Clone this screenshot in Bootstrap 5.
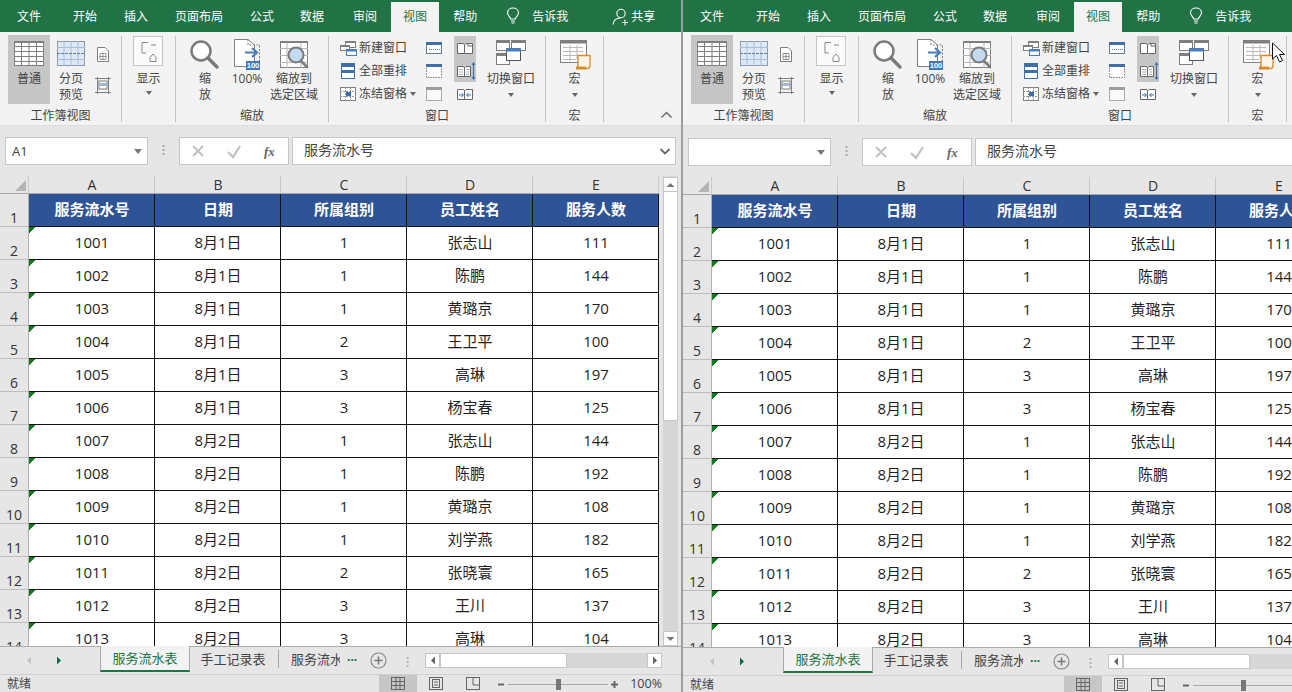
<!doctype html>
<html lang="zh">
<head>
<meta charset="utf-8">
<title>Excel</title>
<link href="https://cdn.jsdelivr.net/npm/bootstrap@5.3.0/dist/css/bootstrap.min.css" rel="stylesheet">
<style>
html,body{height:692px;overflow:hidden;margin:0}
body{font-family:"Open Sans","Noto Sans CJK SC",sans-serif;font-size:12px;color:#444;background:#e6e6e6}
.xl-desk{width:1292px;height:692px;overflow:hidden;position:relative}
.xl-win{width:683px;flex:none;height:692px;overflow:hidden;background:#e6e6e6}
.xl-win.first{border-right:2px solid #9c9c9c}
.tabsbar{height:32px;background:#217346;color:#fff;padding-top:2px;flex:none}
.tabsbar>span{padding:0 13px;line-height:29px;height:30px;white-space:nowrap}
.tabsbar>span.on{background:#f3f3f3;color:#217346;padding:0 12px;margin:0 1px 0 1px}
.tabsbar svg{flex:none}
.ribbon{height:94px;background:#f3f3f3;flex:none;padding-top:3px;border-bottom:1px solid #e2dcdc;line-height:16px}
.rgrp{flex:none;border-right:1px solid #c4c4c4;margin-top:1px;height:86px;position:relative;text-align:center}
.rbody{height:69px;margin-top:-1px}
.rlabel{line-height:16px;margin-top:4px}
.rbtn{flex:none;height:69px;text-align:center}
.rbtn svg,.rcol svg{display:block}
.rbtn.hot{background:#c6c6c6}
.rcol{flex:none}
.rrow{height:23px;align-items:center;white-space:nowrap;display:flex}
.caret-d{display:block;width:0;height:0;border:3px solid transparent;border-top:4px solid #666;border-bottom:0;margin:6px auto 0}
.fbar{height:50px;flex:none;padding-top:11px}
.second .fbar{height:51px;padding-top:12px}
.fbox{height:28px;background:#fff;border:1px solid #c6c6c6;flex:none}
.fname{width:143px;margin-left:5px;line-height:26px;padding-left:6px;font-size:13px}
.fdots{width:31px;flex:none}
.ftools{width:110px}
.fmain{width:384px;margin-left:3px;line-height:24px;padding-left:11px;font-size:14px}
.sheetarea{flex:1 1 0;min-height:0;overflow:hidden}
.sheetclip{width:660px;flex:none;overflow:hidden}
.table.sheet{--bs-table-bg:transparent;--bs-table-color:#1f1f1f;width:659px;table-layout:fixed;border-collapse:separate;border-spacing:0;margin:0;font-size:15px}
.table.sheet>:not(caption)>*>*{padding:0 0 2px 1px;border:0;border-right:1px solid #111;border-bottom:1px solid #111;text-align:center;vertical-align:middle;height:33px;box-shadow:none;font-weight:400;line-height:20px;background:#fff}
.table.sheet>:not(caption)>*>.ch{height:18px;padding:0 0 0 1px;background:#e6e6e6;border-right:1px solid #c8c8c8;border-bottom:1px solid #a6a6a6;font-size:14px;color:#333;line-height:17px}
.table.sheet>:not(caption)>*>.rh{background:#e6e6e6;border-right:1px solid #b0b0b0;border-bottom:1px solid #bdbdbd;font-size:14px;color:#333;vertical-align:bottom;line-height:16px;padding:0}
.table.sheet>:not(caption)>*>.hd{background:#2f5496;color:#fff;font-weight:700}
.table.sheet>:not(caption)>*>.tri{background:#fff linear-gradient(135deg,#0f7a1e 4.4px,rgba(255,255,255,0) 4.8px) no-repeat}
.vscroll{width:15px;margin-left:3px;flex:none;background:#d6d6d6;border:0;padding-top:1px}
.sbtn{background:#fff;border:1px solid #c6c6c6;flex:none;align-items:center;justify-content:center;display:flex}
.vscroll .sbtn{height:15px}
.vthumb{height:229px;background:#fff;border:1px solid #c6c6c6;border-top:0;flex:none}
.tabstrip{height:28px;flex:none;border-top:1px solid #ababab;position:relative;background:#e6e6e6}
.sh-nav{width:100px;flex:none}
.sh-on{width:90px;flex:none;margin-top:-1px;background:#f3f3f3;border:1px solid #ababab;border-top:0;border-bottom:2px solid #217346;height:26px;color:#217346;font-size:13px;text-align:center;line-height:24px}
.sh-tab{width:89px;flex:none;height:18px;margin-top:3px;padding-right:2px;border-right:1px solid #a8a8a8;font-size:13px;text-align:center;line-height:18px;color:#444}
.sh-cut{width:49px;flex:none;margin:3px 0 0 12px;overflow:hidden;white-space:nowrap;font-size:13px;line-height:18px;color:#444}
.hsc{height:15px;margin-top:6px;flex:none;width:237px}
.hsc .sbtn{width:15px}
.hthumb{width:127px;background:#fff;border:1px solid #c6c6c6;flex:none}
.htrack{flex:1 1 0;background:#d6d6d6}
.statusbar{height:18px;flex:none;border-top:1px solid #d0d0d0;line-height:17px;padding-left:7px;padding-right:19px}
.second .statusbar{height:17px}
.statusbar .vw{width:38px;height:17px;flex:none}
.statusbar .vw.act{background:#c6c6c6}
.cursorshape{position:absolute;left:1271px;top:42px;pointer-events:none}
</style>
</head>
<body>
<div class="xl-desk d-flex" id="desk"></div>
<script>
const G='#7f7f7f',B='#4a7ebb';
const svg=(w,h,s)=>`<svg width="${w}" height="${h}" viewBox="0 0 ${w} ${h}" fill="none">${s}</svg>`;
const ic={
normal:svg(42,36,`<rect x="6.500" y="6.500" width="29" height="24" fill="#fff" stroke="${G}"/><path d="M6 11.500H36M6 16.500H36M6 21.500H36M6 26.500H36M13.500 6V31M21 6V31M28.500 6V31" stroke="${G}"/><rect x="6" y="6" width="30" height="2" fill="${G}"/>`),
page:svg(42,36,`<rect x="7.500" y="6.500" width="27" height="24" fill="#dfe9f6" stroke="#8a9bb0"/><path d="M7 12.500H35M7 24.500H35M14 6V31M21 6V31M28 6V31" stroke="#a9bedb"/><path d="M7 18.500H35" stroke="#5a7fae" stroke-dasharray="3 1"/>`),
smalls:svg(22,69,`<path d="M5.500 12.500H13L16.500 16V26.500H5.500Z" fill="#fff" stroke="${G}"/><path d="M8 18.500H14V24.500H8ZM11 18V25M8 21.500H14" stroke="${G}" stroke-width=".8"/><path d="M3 43.500H19M3 57.500H19M5.500 42V59M16.500 42V59" stroke="${G}"/><rect x="7" y="46" width="8" height="8" fill="#fff" stroke="${G}"/><rect x="7" y="48" width="8" height="3" fill="#9fb6d6"/>`),
show:svg(54,36,`<rect x="11.500" y="1.500" width="29" height="29" fill="#fafafa" stroke="#c6c6c6"/><path d="M20 7.500H26M20 7.500V18H24M29 10H34M28 22.500L31 19L34 22.500V26.500H28Z" stroke="#888" fill="none"/>`),
mag:svg(38,36,`<circle cx="15" cy="16" r="9.500" fill="#fff" stroke="#7b7b7b" stroke-width="2.500"/><path d="M22 23L31 32" stroke="#7b7b7b" stroke-width="3.500" stroke-linecap="round"/>`),
hund:svg(46,36,`<path d="M10.500 4.500H24L30.500 10V31.500H10.500Z" fill="#fff" stroke="${G}"/><path d="M24 4.500V10H35.500V26" stroke="${G}" stroke-dasharray="2 1.500"/><path d="M21 17.500H32M28 13L33 17.500L28 22" stroke="${B}" stroke-width="2.200"/><rect x="22" y="26" width="14" height="9" fill="#3f79ba"/><text x="29" y="33.300" text-anchor="middle" fill="#fff" font-size="7.500" font-weight="700" font-family="Liberation Sans">100</text>`),
sel:svg(48,36,`<rect x="10.500" y="6.500" width="27" height="26" fill="#fff" stroke="${G}"/><path d="M10 13.500H38M10 20.500H38M10 27.500H38M17 6V33M31 6V33" stroke="#b5b5b5"/><rect x="10" y="6" width="28" height="2" fill="${G}"/><circle cx="26" cy="20" r="7.500" fill="#c4daf0" stroke="#7b7b7b" stroke-width="2"/><path d="M31 26L37 32" stroke="#7b7b7b" stroke-width="2.600" stroke-linecap="round"/>`),
neww:svg(18,16,`<rect x="6.500" y="1.500" width="10" height="6" fill="#fff" stroke="${G}"/><rect x="6" y="1" width="11" height="2" fill="${G}"/><rect x="1.500" y="5.500" width="9" height="5" fill="#fff" stroke="${G}"/><rect x="1" y="5" width="10" height="2" fill="${G}"/><rect x="7.500" y="9.500" width="10" height="6" fill="#fff" stroke="${B}"/><rect x="7" y="9" width="11" height="2.500" fill="${B}"/>`),
arr:svg(18,18,`<rect x="2.500" y="1.500" width="13" height="15" fill="#fff" stroke="#3f6fa8"/><rect x="2" y="1" width="14" height="4" fill="#3f6fa8"/><rect x="2" y="8" width="14" height="3" fill="#3f6fa8"/>`),
frz:svg(18,18,`<rect x="1.500" y="2.500" width="15" height="13" fill="#fff" stroke="${G}"/><path d="M1 6.500H17M1 11.500H17M6.500 2V16M11.500 2V16" stroke="#9a9a9a" stroke-dasharray="2 1"/><rect x="7" y="7" width="5" height="4" fill="#3f6fa8"/>`),
win1:svg(18,14,`<rect x=".5" y="1.500" width="15" height="11" fill="#fff" stroke="#5f7f9f"/><rect x="0" y="1" width="16" height="3" fill="#3f6fa8"/><path d="M3 8.500H14" stroke="${B}" stroke-dasharray="1 1"/>`),
win2:svg(18,16,`<rect x=".5" y="1.500" width="15" height="13" fill="#fff" stroke="#777" stroke-dasharray="1.500 1.200"/><rect x="0" y="1" width="16" height="3" fill="#3f6fa8"/>`),
win3:svg(18,16,`<rect x=".5" y="1.500" width="15" height="13" fill="#fafafa" stroke="#aaa"/><rect x="0" y="1" width="16" height="3" fill="#9c9c9c"/>`),
pg1:svg(22,14,`<path d="M3.500 2.500H9.500L10.500 4V12.500H3.500ZM10.500 4L12 2.500H18.500V12.500H10.500" fill="#fff" stroke="#666"/><path d="M14 2.500V5H18.500" stroke="#666"/>`),
pg2:svg(22,18,`<path d="M3.500 4.500H9.500L10.500 6V14.500H3.500ZM10.500 6L12 4.500H16.500V14.500H10.500" fill="#fff" stroke="#666"/><path d="M5 7.500H9M5 10H9M5 12.500H9M12 7.500H15M12 10H15M12 12.500H15" stroke="#999" stroke-width=".8"/><path d="M19.500 1V17M18 3L19.500 1L21 3M18 15L19.500 17L21 15" stroke="#3f6fa8" stroke-width="1.100"/>`),
pg3:svg(22,16,`<path d="M3.500 3.500H9.500L10.500 5V13.500H3.500ZM10.500 5L12 3.500H18.500V13.500H10.500" fill="#fff" stroke="#666"/><path d="M5 9H9M7.500 7L9.500 9L7.500 11M17 9H13M14.500 7L12.500 9L14.500 11" stroke="#3f6fa8" stroke-width="1"/>`),
sw:svg(60,36,`<rect x="15.500" y="5.500" width="13" height="10" fill="#fff" stroke="${G}"/><rect x="15" y="5" width="14" height="3" fill="${G}"/><rect x="30.500" y="5.500" width="14" height="10" fill="#fff" stroke="${G}"/><rect x="30" y="5" width="15" height="3" fill="${G}"/><rect x="15.500" y="18.500" width="13" height="11" fill="#fff" stroke="${G}"/><rect x="15" y="18" width="14" height="3" fill="${G}"/><rect x="25.500" y="13.500" width="14" height="12" fill="#fff" stroke="#555"/><rect x="25" y="13" width="15" height="3.500" fill="${B}"/>`),
mac:svg(58,36,`<rect x="14.500" y="5.500" width="26" height="22" fill="#fff" stroke="${G}"/><rect x="14" y="5" width="27" height="3.500" fill="${G}"/><path d="M17 12.500H37M17 16.500H37M17 20.500H37M17 24.500H30M24 10V26M31 10V24" stroke="#b9b9b9"/><path d="M32 20.500H44V31C44 33 42 33.500 41 33.500H30C32 33 32 31 32 29.500Z" fill="#fbf4e8" stroke="#d68b2b" stroke-width="1.300"/><path d="M30 33H40" stroke="#d68b2b" stroke-width="2.800"/>`),
bulb:svg(14,18,`<path d="M4.500 12C4.500 9.500 1.500 9 1.500 5.800C1.500 3 4 1 7 1C10 1 12.500 3 12.500 5.800C12.500 9 9.500 9.500 9.500 12Z" stroke="#fff" stroke-width="1.100"/><path d="M5 14H9M5.500 16H8.500" stroke="#fff" stroke-width="1.100"/>`),
user:svg(18,18,`<circle cx="9" cy="5.500" r="4.200" stroke="#fff" stroke-width="1.100"/><path d="M1 16.500C1.500 12.500 4 10 8.500 10" stroke="#fff" stroke-width="1.100"/><path d="M13 11.500V17.500M10 14.500H16" stroke="#fff" stroke-width="1.100"/>`),
up:svg(13,8,`<path d="M1.500 6.500L6.500 1.500L11.500 6.500" stroke="#666" stroke-width="1.400"/>`),
};
const rows=[['1001','8月1日','1','张志山','111'],['1002','8月1日','1','陈鹏','144'],['1003','8月1日','1','黄璐京','170'],['1004','8月1日','2','王卫平','100'],['1005','8月1日','3','高琳','197'],['1006','8月1日','3','杨宝春','125'],['1007','8月2日','1','张志山','144'],['1008','8月2日','1','陈鹏','192'],['1009','8月2日','1','黄璐京','108'],['1010','8月2日','1','刘学燕','182'],['1011','8月2日','2','张晓寰','165'],['1012','8月2日','3','王川','137'],['1013','8月2日','3','高琳','104']];
const heads=['服务流水号','日期','所属组别','员工姓名','服务人数'];
const table=`<table class="table sheet"><colgroup><col style="width:29px">${'<col style="width:126px">'.repeat(5)}</colgroup><tbody>
<tr><td class="ch"><svg width="28" height="17" style="display:block"><path d="M25 4V15H14Z" fill="#b4b4b4"/></svg></td>${['A','B','C','D','E'].map(c=>`<td class="ch">${c}</td>`).join('')}</tr>
<tr><td class="rh">1</td>${heads.map(h=>`<td class="hd">${h}</td>`).join('')}</tr>
${rows.map((r,i)=>`<tr><td class="rh">${i+2}</td>${r.map((c,j)=>`<td${j==0?' class="tri"':''}>${c}</td>`).join('')}</tr>`).join('')}
<tr><td class="rh">14</td><td class="tri"></td><td></td><td></td><td></td><td></td></tr>
</tbody></table>`;
const tri=(d,c)=>d=='l'?`<svg width="6" height="9"><path d="M5 .5V8.500L1 4.500Z" fill="${c}"/></svg>`:d=='r'?`<svg width="6" height="9"><path d="M1 .5V8.500L5 4.500Z" fill="${c}"/></svg>`:d=='u'?`<svg width="9" height="6"><path d="M.5 5H8.500L4.500 1Z" fill="${c}"/></svg>`:`<svg width="9" height="6"><path d="M.5 1H8.500L4.500 5Z" fill="${c}"/></svg>`;
const pane=(cls)=>{const first=cls=='first';return `<section class="xl-win d-flex flex-column ${cls}">
<div class="tabsbar d-flex align-items-start">
<span style="margin-left:4px;margin-right:6px">文件</span><span>开始</span><span style="margin-left:1px">插入</span><span style="margin-left:1px">页面布局</span><span style="margin-left:1px">公式</span><span>数据</span><span style="margin-left:3px">审阅</span><span class="on">视图</span><span>帮助</span>
<span class="d-flex align-items-start" style="padding:5px 0 0 16px;height:auto;line-height:18px">${ic.bulb}<span style="margin-left:12px;margin-top:1px">告诉我</span></span>
<span class="d-flex align-items-start" style="padding:6px 0 0 44px;height:auto;line-height:18px">${ic.user}<span style="margin-left:1px">共享</span></span>
</div>
<div class="ribbon d-flex">
<div class="rgrp" style="width:122px"><div class="rbody d-flex" style="padding-left:8px">
<div class="rbtn hot" style="width:42px">${ic.normal}普通</div>
<div class="rbtn" style="width:42px">${ic.page}分页<br>预览</div>
<div class="rcol">${ic.smalls}</div></div><div class="rlabel">工作簿视图</div></div>
<div class="rgrp" style="width:54px"><div class="rbody"><div class="rbtn">${ic.show}显示<span class="caret-d" style="margin-top:4px"></span></div></div></div>
<div class="rgrp" style="width:153px"><div class="rbody d-flex" style="padding-left:10px">
<div class="rbtn" style="width:38px">${ic.mag}缩<br>放</div>
<div class="rbtn" style="width:46px">${ic.hund}100%</div>
<div class="rbtn" style="width:48px">${ic.sel}<span style="margin-left:-8px;margin-right:-8px;display:block">缩放到<br>选定区域</span></div>
</div><div class="rlabel">缩放</div></div>
<div class="rgrp" style="width:217px"><div class="rbody d-flex" style="padding-left:10px">
<div class="rcol" style="width:85px;padding-top:1px;text-align:left">
<div class="rrow">${ic.neww}<span style="margin-left:2px">新建窗口</span></div>
<div class="rrow">${ic.arr}<span style="margin-left:2px">全部重排</span></div>
<div class="rrow">${ic.frz}<span style="margin-left:2px">冻结窗格</span><span class="caret-d" style="margin:0 0 0 3px"></span></div></div>
<div class="rcol" style="width:30px;padding:1px 0 0 2px"><div class="rrow">${ic.win1}</div><div class="rrow">${ic.win2}</div><div class="rrow">${ic.win3}</div></div>
<div class="rcol" style="width:22px;margin-right:5px;padding-top:1px"><div style="background:#c6c6c6"><div class="rrow">${ic.pg1}</div><div class="rrow">${ic.pg2}</div></div><div class="rrow">${ic.pg3}</div></div>
<div class="rbtn" style="width:60px">${ic.sw}切换窗口<span class="caret-d"></span></div>
</div><div class="rlabel">窗口</div></div>
<div class="rgrp" style="width:58px"><div class="rbody"><div class="rbtn">${ic.mac}宏<span class="caret-d"></span></div></div><div class="rlabel">宏</div></div>
<div class="ms-auto align-self-end" style="padding:0 8px 3px 0">${ic.up}</div>
</div>
<div class="fbar d-flex">
<div class="fbox fname d-flex justify-content-between align-items-center"><span>${first?'A1':''}</span><span class="caret-d" style="margin:0 5px 0 0;border-width:4px;border-top-width:5px;border-top-color:#777;border-bottom:0"></span></div>
<div class="fdots d-flex justify-content-center align-items-center" style="height:28px">${svg(3,14,'<path d="M1.500 1V13" stroke="#aaa" stroke-width="2" stroke-dasharray="2 2"/>')}</div>
<div class="fbox ftools d-flex align-items-center">${svg(108,26,`<path d="M13 8L23 18M23 8L13 18" stroke="#c0c0c0" stroke-width="1.800"/><path d="M48 14L53 19L60 8" stroke="#c0c0c0" stroke-width="2.200"/><text x="84" y="18" font-family="Liberation Serif" font-style="italic" font-weight="700" font-size="13" fill="#666">fx</text>`)}</div>
<div class="fbox fmain d-flex justify-content-between"><span>服务流水号</span><span class="me-1">${svg(12,24,'<path d="M1.500 10L6 14.500L10.500 10" stroke="#666" stroke-width="1.800"/>')}</span></div>
</div>
<div class="sheetarea d-flex">
<div class="sheetclip">${table}</div>
<div class="vscroll d-flex flex-column"><div class="sbtn">${tri('u','#777')}</div><div class="vthumb"></div><div class="flex-grow-1"></div><div class="sbtn">${tri('d','#777')}</div></div>
</div>
<div class="tabstrip d-flex">
<div class="sh-nav d-flex align-items-center" style="padding-left:26px;gap:24px">${tri('l','#c4c4c4')}${tri('r','#0b6b42')}</div>
<div class="sh-on">服务流水表</div><div class="sh-tab">手工记录表</div><div class="sh-cut">服务流水</div>
<div style="width:24px;flex:none;margin-top:-1px;padding-left:7px;color:#0b6b42;font-weight:700;line-height:22px;font-size:12px">...</div>
<div style="width:34px;flex:none;padding:4px 0 0 6px">${svg(17,17,'<circle cx="8.500" cy="8.500" r="7.500" stroke="#8a8a8a" stroke-width="1.200" fill="none"/><path d="M8.500 4.500V12.500M4.500 8.500H12.500" stroke="#777" stroke-width="1.500"/>')}</div>
<div style="width:27px;flex:none;padding:6px 0 0 8px">${svg(3,14,'<path d="M1.500 1V13" stroke="#b5b5b5" stroke-width="2" stroke-dasharray="2 2"/>')}</div>
<div class="hsc d-flex"><div class="sbtn">${tri('l','#666')}</div><div class="hthumb"></div><div class="htrack"></div><div class="sbtn">${tri('r','#666')}</div></div>
</div>
<div class="statusbar d-flex align-items-start">
<span>就绪</span>
<div class="ms-auto d-flex align-items-start">
<div class="vw act d-flex justify-content-center align-items-center">${svg(14,13,'<rect x=".5" y=".5" width="13" height="12" stroke="#666"/><path d="M0 4.500H14M0 8.500H14M5 0V13M9 0V13" stroke="#666"/>')}</div>
<div class="vw d-flex justify-content-center align-items-center">${svg(14,13,'<rect x=".5" y=".5" width="13" height="12" stroke="#666"/><rect x="3.500" y="2.500" width="7" height="8" stroke="#666"/><path d="M5 5H9M5 8H9" stroke="#666"/>')}</div>
<div class="vw d-flex justify-content-center align-items-center" style="width:36px">${svg(14,13,'<rect x=".5" y=".5" width="13" height="12" stroke="#666"/><path d="M7 0V8H14" stroke="#666"/>')}</div>
<div style="width:120px;flex:none;height:17px;margin-left:7px;margin-right:12px">${svg(120,17,'<path d="M0 8.500H6" stroke="#666" stroke-width="2"/><path d="M10 8.500H110" stroke="#aaa"/><rect x="58" y="3" width="5" height="11" fill="#777"/><path d="M113 8.500H120M116.500 5V12" stroke="#666" stroke-width="2"/>')}</div>
<span style="width:32px;flex:none;text-align:right;font-size:12.5px">100%</span>
</div></div>
</section>`};
document.getElementById('desk').innerHTML=pane('first')+pane('second')+`<div class="cursorshape">${svg(15,21,'<path d="M1.500 1V17L5.500 13.500L8.500 20L11.500 18.500L8.500 12.500H13.500Z" fill="#fff" stroke="#111"/>')}</div>`;
</script>
<script src="https://cdn.jsdelivr.net/npm/bootstrap@5.3.0/dist/js/bootstrap.bundle.min.js"></script>
</body>
</html>
